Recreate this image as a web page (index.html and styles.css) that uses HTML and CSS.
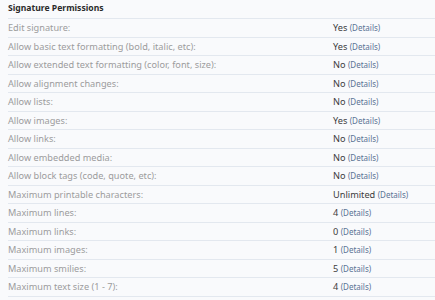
FILE: index.html
```html
<!DOCTYPE html>
<html lang="en">
<head>
    <meta charset="UTF-8">
    <title>Signature Permissions</title>
    <link rel="stylesheet" href="styles.css">
</head>
<body>
    <div class="perm-block">
        <h3 class="perm-title">Signature Permissions</h3>
        <div class="perm-row"><span class="perm-label">Edit signature:</span><span class="perm-value">Yes <a href="#">(Details)</a></span></div>
        <div class="perm-row"><span class="perm-label">Allow basic text formatting (bold, italic, etc):</span><span class="perm-value">Yes <a href="#">(Details)</a></span></div>
        <div class="perm-row"><span class="perm-label">Allow extended text formatting (color, font, size):</span><span class="perm-value">No <a href="#">(Details)</a></span></div>
        <div class="perm-row"><span class="perm-label">Allow alignment changes:</span><span class="perm-value">No <a href="#">(Details)</a></span></div>
        <div class="perm-row"><span class="perm-label">Allow lists:</span><span class="perm-value">No <a href="#">(Details)</a></span></div>
        <div class="perm-row"><span class="perm-label">Allow images:</span><span class="perm-value">Yes <a href="#">(Details)</a></span></div>
        <div class="perm-row"><span class="perm-label">Allow links:</span><span class="perm-value">No <a href="#">(Details)</a></span></div>
        <div class="perm-row"><span class="perm-label">Allow embedded media:</span><span class="perm-value">No <a href="#">(Details)</a></span></div>
        <div class="perm-row"><span class="perm-label">Allow block tags (code, quote, etc):</span><span class="perm-value">No <a href="#">(Details)</a></span></div>
        <div class="perm-row"><span class="perm-label">Maximum printable characters:</span><span class="perm-value">Unlimited <a href="#">(Details)</a></span></div>
        <div class="perm-row"><span class="perm-label">Maximum lines:</span><span class="perm-value">4 <a href="#">(Details)</a></span></div>
        <div class="perm-row"><span class="perm-label">Maximum links:</span><span class="perm-value">0 <a href="#">(Details)</a></span></div>
        <div class="perm-row"><span class="perm-label">Maximum images:</span><span class="perm-value">1 <a href="#">(Details)</a></span></div>
        <div class="perm-row"><span class="perm-label">Maximum smilies:</span><span class="perm-value">5 <a href="#">(Details)</a></span></div>
        <div class="perm-row"><span class="perm-label">Maximum text size (1 - 7):</span><span class="perm-value">4 <a href="#">(Details)</a></span></div>
    </div>
</body>
</html>
```

FILE: styles.css
```css
body {
    margin: 0;
    padding: 0;
    background-color: #f9fafc;
    font-family: "Noto Sans", "DejaVu Sans", sans-serif;
    height: 100vh;
    overflow: hidden;
}
.perm-block {
    padding: 0 0 0 8px;
}
.perm-title {
    margin: 0;
    padding: 2px 0 0;
    height: 16px;
    font-size: 8.6px;
    font-weight: bold;
    color: #2b2b2b;
    border-bottom: 1px solid #e3e8ef;
}
.perm-row {
    display: flex;
    align-items: center;
    height: 17.5px;
    border-bottom: 1px solid #e3e8ef;
    font-size: 9.2px;
}
.perm-label {
    width: 325px;
    color: #9c9c9c;
}
.perm-value {
    color: #3c3c3c;
}
.perm-value a {
    color: #5b7394;
    text-decoration: none;
    font-size: 8px;
}
```
